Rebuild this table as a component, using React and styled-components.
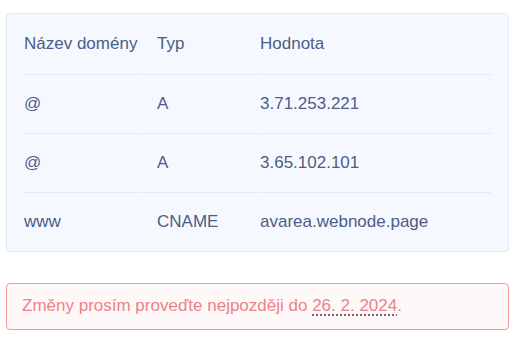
import React from "react";
import styled, { createGlobalStyle } from "styled-components";

const Global = createGlobalStyle`
  html, body { margin: 0; padding: 0; background: #ffffff; }
  body { font-family: "Liberation Sans", Arial, sans-serif; }
`;

const Page = styled.div`
  padding: 13px 13px 0 6px;
`;

const Card = styled.div`
  background: #f5f9ff;
  border: 1px solid #deebf8;
  border-radius: 4px;
  padding: 0 17px;
`;

const Row = styled.div`
  display: grid;
  grid-template-columns: 116px 116px 1fr;
  column-gap: 2px;
`;

const Cell = styled.div`
  height: ${(p) => (p.$head ? "60px" : "58px")};
  display: flex;
  align-items: center;
  padding-left: ${(p) => (p.$indent ? "15px" : "0")};
  border-bottom: ${(p) => (p.$last ? "none" : "1px solid #dcebf9")};
  font-size: 17px;
  color: #4e5c86;
  white-space: nowrap;
`;

const Alert = styled.div`
  margin-top: 31px;
  border: 1px solid #f49a9a;
  border-radius: 4px;
  background: #fff8f8;
  padding: 12px 15px 13px;
  font-size: 17px;
  line-height: 20px;
  color: #ec8388;
`;

const DateMark = styled.span`
  text-decoration: underline dotted #555;
  text-underline-offset: 4px;
`;

const rows = [
  ["Název domény", "Typ", "Hodnota"],
  ["@", "A", "3.71.253.221"],
  ["@", "A", "3.65.102.101"],
  ["www", "CNAME", "avarea.webnode.page"],
];

export default function App() {
  return (
    <Page>
      <Global />
      <Card>
        {rows.map((r, i) => {
          const last = i === rows.length - 1;
          const head = i === 0;
          return (
            <Row key={i}>
              <Cell $last={last} $head={head}>{r[0]}</Cell>
              <Cell $last={last} $head={head} $indent>{r[1]}</Cell>
              <Cell $last={last} $head={head}>{r[2]}</Cell>
            </Row>
          );
        })}
      </Card>
      <Alert>
        Změny prosím proveďte nejpozději do <DateMark>26. 2. 2024</DateMark>.
      </Alert>
    </Page>
  );
}
